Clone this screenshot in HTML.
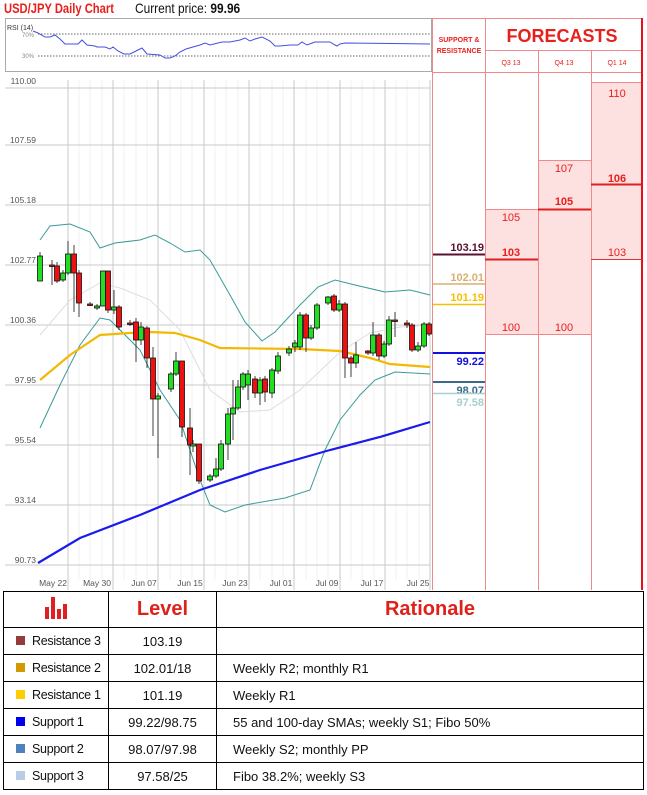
<!DOCTYPE html>
<html><head><meta charset="utf-8"><style>
body{margin:0;background:#fff;width:647px;height:795px;overflow:hidden;font-family:"Liberation Sans",sans-serif;position:relative}
.t{position:absolute;white-space:nowrap;transform-origin:0 0}
table{position:absolute;left:3px;top:591px;width:641px;border-collapse:collapse;font-size:13px;color:#111;table-layout:fixed}
td{border:1.5px solid #000;height:26px;padding:0;white-space:nowrap;overflow:hidden}
td:first-child{font-size:12.5px;letter-spacing:-0.3px}
th{border:1.5px solid #000;height:33px;color:#e0201a;font-size:20px;font-weight:bold}
.sw{display:inline-block;width:9px;height:9px;margin:0 7px 0 12px}
</style></head><body>
<div class="t" style="left:4px;top:0;font-size:14px;color:#e8201c;font-weight:bold;transform:scaleX(0.8)">USD/JPY Daily Chart</div>
<div class="t" style="left:135px;top:0;font-size:14px;color:#111;transform:scaleX(0.85)">Current price: <b>99.96</b></div>
<svg width="647" height="595" style="position:absolute;left:0;top:0" font-family="Liberation Sans" >
<rect x="5.5" y="18.5" width="426" height="53" fill="#fff" stroke="#aaa"/>
<text x="7" y="30" font-size="7" fill="#333">RSI (14)</text>
<text x="22" y="37" font-size="6" fill="#888">70%</text><text x="22" y="58" font-size="6" fill="#888">30%</text>
<line x1="38" y1="34" x2="430" y2="34" stroke="#666" stroke-dasharray="1.5,1.5"/>
<line x1="38" y1="56" x2="430" y2="56" stroke="#666" stroke-dasharray="1.5,1.5"/>
<polyline fill="none" stroke="#4050e0" stroke-width="1" points="33,31 38,33 45,37 50,37 55,35 60,39 65,44 78,44 82,40 87,45 95,46 97,47 105,47 110,49 113,47 118,51 124,54 130,54 136,51 142,48 147,54 160,55 165,58 170,58 175,56 180,52 186,49 193,47 200,45 205,43 210,45 214,44 222,42 230,42 240,40 245,38 250,41 255,39 262,37 270,41 275,46 280,46 290,45 298,45 302,42 307,45 315,42 330,42 335,45 337,46 340,44 345,43 430,44"/>
<g stroke="#f2f2f2" stroke-width="1">
<line x1="79" y1="80" x2="79" y2="580"/><line x1="90" y1="80" x2="90" y2="580"/><line x1="102" y1="80" x2="102" y2="580"/>
<line x1="124" y1="80" x2="124" y2="580"/><line x1="136" y1="80" x2="136" y2="580"/><line x1="147" y1="80" x2="147" y2="580"/>
<line x1="170" y1="80" x2="170" y2="580"/><line x1="181" y1="80" x2="181" y2="580"/><line x1="192" y1="80" x2="192" y2="580"/>
<line x1="215" y1="80" x2="215" y2="580"/><line x1="226" y1="80" x2="226" y2="580"/><line x1="238" y1="80" x2="238" y2="580"/>
<line x1="260" y1="80" x2="260" y2="580"/><line x1="272" y1="80" x2="272" y2="580"/><line x1="283" y1="80" x2="283" y2="580"/>
<line x1="306" y1="80" x2="306" y2="580"/><line x1="317" y1="80" x2="317" y2="580"/><line x1="328" y1="80" x2="328" y2="580"/>
<line x1="351" y1="80" x2="351" y2="580"/><line x1="362" y1="80" x2="362" y2="580"/><line x1="374" y1="80" x2="374" y2="580"/>
<line x1="396" y1="80" x2="396" y2="580"/><line x1="407" y1="80" x2="407" y2="580"/><line x1="419" y1="80" x2="419" y2="580"/>
</g>
<g stroke="#c8c8c8" stroke-width="1">
<line x1="5" y1="88" x2="430" y2="88"/><line x1="5" y1="145" x2="430" y2="145"/><line x1="5" y1="205" x2="430" y2="205"/>
<line x1="5" y1="265" x2="430" y2="265"/><line x1="5" y1="325" x2="430" y2="325"/><line x1="5" y1="385" x2="430" y2="385"/>
<line x1="5" y1="445" x2="430" y2="445"/><line x1="5" y1="505" x2="430" y2="505"/><line x1="5" y1="565" x2="430" y2="565"/>
<line x1="68" y1="80" x2="68" y2="590"/><line x1="113" y1="80" x2="113" y2="590"/><line x1="158" y1="80" x2="158" y2="590"/>
<line x1="204" y1="80" x2="204" y2="590"/><line x1="249" y1="80" x2="249" y2="590"/><line x1="294" y1="80" x2="294" y2="590"/>
<line x1="340" y1="80" x2="340" y2="590"/><line x1="385" y1="80" x2="385" y2="590"/><line x1="430" y1="80" x2="430" y2="590"/>
</g>
<g font-size="8.5" fill="#555" text-anchor="end">
<text x="36" y="84">110.00</text><text x="36" y="143">107.59</text><text x="36" y="203">105.18</text><text x="36" y="263">102.77</text>
<text x="36" y="323">100.36</text><text x="36" y="383">97.95</text><text x="36" y="443">95.54</text><text x="36" y="503">93.14</text><text x="36" y="563">90.73</text>
</g>
<g font-size="8.5" fill="#555" text-anchor="middle">
<text x="53" y="586">May 22</text><text x="97" y="586">May 30</text><text x="144" y="586">Jun 07</text><text x="190" y="586">Jun 15</text>
<text x="235" y="586">Jun 23</text><text x="281" y="586">Jul 01</text><text x="327" y="586">Jul 09</text><text x="372" y="586">Jul 17</text><text x="418" y="586">Jul 25</text>
</g>
<polyline fill="none" stroke="#ddd" stroke-width="1" points="40,335 70,300 100,283 120,288 150,300 180,330 210,390 240,412 270,410 300,390 340,352 370,333 400,327 430,325"/>
<polyline fill="none" stroke="#3a9a9a" stroke-width="1" points="40,240 50,226 70,224 90,232 100,248 115,243 140,240 155,235 170,243 185,252 200,250 210,260 230,295 245,322 262,341 275,332 300,305 318,287 335,280 355,285 385,292 410,290 430,295"/>
<polyline fill="none" stroke="#3a9a9a" stroke-width="1" points="40,428 60,385 80,345 100,318 110,320 140,350 160,390 180,420 200,480 210,505 225,512 245,505 285,498 310,490 325,450 340,420 360,395 375,380 395,372 430,374"/>
<polyline fill="none" stroke="#f5b800" stroke-width="2.2" points="40,380 70,355 100,335 130,333 150,332 175,333 200,340 220,348 300,349 340,351 370,358 390,364 430,367"/>
<polyline fill="none" stroke="#1a1aee" stroke-width="2.2" points="38,563 80,538 140,515 200,490 260,470 330,450 380,437 430,422"/>
<g stroke="#111" stroke-width="0.8" id="c"></g>
<rect x="485" y="209" width="53" height="125" fill="#fde0e0"/>
<rect x="538" y="160" width="53" height="174" fill="#fde0e0"/>
<rect x="591" y="82" width="51" height="177" fill="#fde0e0"/>
<g stroke="#f08a8a" stroke-width="1">
<line x1="432.5" y1="18" x2="432.5" y2="590"/><line x1="485.5" y1="18" x2="485.5" y2="590"/><line x1="538.5" y1="50" x2="538.5" y2="590"/><line x1="591.5" y1="50" x2="591.5" y2="590"/>
<line x1="432" y1="18.5" x2="642" y2="18.5"/><line x1="485" y1="50.5" x2="642" y2="50.5"/><line x1="432" y1="72.5" x2="642" y2="72.5"/>
<line x1="485" y1="209.5" x2="538" y2="209.5"/><line x1="485" y1="334.5" x2="591" y2="334.5"/><line x1="538" y1="160.5" x2="591" y2="160.5"/>
<line x1="591" y1="82.5" x2="642" y2="82.5"/>
</g>
<line x1="642" y1="18" x2="642" y2="590" stroke="#e8101a" stroke-width="2"/>
<line x1="591" y1="259.5" x2="642" y2="259.5" stroke="#e83030" stroke-width="1"/>
<line x1="485" y1="259.5" x2="538" y2="259.5" stroke="#e02020" stroke-width="2"/>
<line x1="538" y1="209.5" x2="591" y2="209.5" stroke="#e02020" stroke-width="2"/>
<line x1="591" y1="184.5" x2="642" y2="184.5" stroke="#e02020" stroke-width="2"/>
<g fill="#e8201c" text-anchor="middle">
<text x="459" y="42" font-size="7" font-weight="bold">SUPPORT &amp;</text><text x="459" y="53" font-size="7" font-weight="bold">RESISTANCE</text>
<text x="562" y="42" font-size="18" font-weight="bold">FORECASTS</text>
<text x="511" y="65" font-size="7">Q3 13</text><text x="564" y="65" font-size="7">Q4 13</text><text x="617" y="65" font-size="7">Q1 14</text>
<g font-size="11"><text x="617" y="97">110</text><text x="617" y="182" font-weight="bold">106</text><text x="617" y="256">103</text>
<text x="564" y="172">107</text><text x="564" y="205" font-weight="bold">105</text><text x="564" y="331">100</text>
<text x="511" y="221">105</text><text x="511" y="256" font-weight="bold">103</text><text x="511" y="331">100</text></g>
</g>
<g font-size="11" font-weight="bold" text-anchor="end">
<text x="484" y="251" fill="#5a1030">103.19</text><text x="484" y="281" fill="#d8b070">102.01</text><text x="484" y="301" fill="#f5c000">101.19</text>
<text x="484" y="365" fill="#1010e0">99.22</text><text x="484" y="394" fill="#3a6a8a">98.07</text><text x="484" y="406" fill="#a8d0d0">97.58</text>
</g>
<line x1="433" y1="254.5" x2="485" y2="254.5" stroke="#5a1030" stroke-width="2"/>
<line x1="433" y1="284" x2="485" y2="284" stroke="#d8b070" stroke-width="1.5"/>
<line x1="433" y1="304.5" x2="485" y2="304.5" stroke="#f5c000" stroke-width="1.5"/>
<line x1="433" y1="353" x2="485" y2="353" stroke="#1010e0" stroke-width="2"/>
<line x1="433" y1="382" x2="485" y2="382" stroke="#3a6a8a" stroke-width="2"/>
<line x1="433" y1="393.5" x2="485" y2="393.5" stroke="#a8d0d0" stroke-width="1.5"/>
</svg>
<table>
<colgroup><col style="width:105px"><col style="width:108px"><col></colgroup>
<tr><th><svg width="22" height="24" viewBox="0 0 22 24"><g fill="#e02020"><rect x="0" y="12" width="4" height="12"/><rect x="6" y="2" width="4" height="22"/><rect x="12" y="14" width="4" height="10"/><rect x="18" y="9" width="4" height="15"/></g></svg></th><th>Level</th><th>Rationale</th></tr>
<tr><td><span class="sw" style="background:#943c3c"></span>Resistance 3</td><td align="center">103.19</td><td></td></tr>
<tr><td><span class="sw" style="background:#d09a00"></span>Resistance 2</td><td align="center">102.01/18</td><td style="padding-left:16px">Weekly R2; monthly R1</td></tr>
<tr><td><span class="sw" style="background:#ffcc00"></span>Resistance 1</td><td align="center">101.19</td><td style="padding-left:16px">Weekly R1</td></tr>
<tr><td><span class="sw" style="background:#0000ee"></span>Support 1</td><td align="center">99.22/98.75</td><td style="padding-left:16px">55 and 100-day SMAs; weekly S1; Fibo 50%</td></tr>
<tr><td><span class="sw" style="background:#4f81bd"></span>Support 2</td><td align="center">98.07/97.98</td><td style="padding-left:16px">Weekly S2; monthly PP</td></tr>
<tr><td><span class="sw" style="background:#b8cce4"></span>Support 3</td><td align="center">97.58/25</td><td style="padding-left:16px">Fibo 38.2%; weekly S3</td></tr>
</table>
<script>
var d=[[40,256,281,252,281,1],[52,265,266,260,285,0],[57,266,281,262,283,0],[63,273,280,270,282,1],[68,254,273,241,275,1],[74,254,273,245,312,0],[79,273,303,270,317,0],[90,304,305,302,306,0],[97,306,308,304,310,1],[103,271,306,271,306,1],[108,271,310,271,313,0],[114,307,310,290,314,1],[119,307,327,305,330,0],[130,323,324,320,326,0],[136,322,340,318,362,0],[141,327,340,322,345,1],[147,328,358,326,368,0],[153,358,399,347,436,0],[158,396,399,393,458,1],[171,374,389,372,392,1],[176,361,374,352,376,1],[182,361,427,361,437,0],[190,428,445,408,475,0],[193,444,446,440,452,1],[199,444,481,444,484,0],[210,476,480,474,482,1],[216,469,476,458,478,1],[221,444,469,440,471,1],[228,414,444,408,460,1],[233,408,414,380,440,1],[238,387,408,380,410,1],[243,374,387,372,390,1],[248,374,385,370,400,1],[255,379,393,376,398,0],[260,380,393,377,405,1],[265,379,392,376,402,0],[272,370,393,368,398,1],[278,356,371,352,374,1],[289,349,353,346,356,1],[295,343,347,340,352,1],[300,315,347,312,350,1],[306,315,338,313,352,0],[311,328,338,325,340,1],[317,305,328,303,330,1],[328,297,303,296,305,1],[334,296,310,294,312,0],[339,304,310,300,312,1],[345,304,358,302,378,0],[351,358,363,356,377,0],[356,355,363,342,368,1],[368,351,353,350,355,0],[373,335,353,322,356,1],[379,335,356,333,360,0],[384,344,356,341,358,1],[389,320,344,316,346,1],[395,320,321,312,337,0],[407,323,325,320,328,0],[412,325,350,323,352,0],[418,346,350,342,352,1],[424,324,346,322,348,1],[429,324,334,322,336,0]];
var s='';d.forEach(function(c){s+='<line x1="'+c[0]+'" x2="'+c[0]+'" y1="'+c[3]+'" y2="'+c[4]+'"/>';var h=Math.max(c[2]-c[1],1.5);s+='<rect x="'+(c[0]-2.5)+'" y="'+c[1]+'" width="5" height="'+h+'" fill="'+(c[5]?'#22dd22':'#ee1111')+'"/>';});
document.getElementById('c').innerHTML=s;
</script>
</body></html>
